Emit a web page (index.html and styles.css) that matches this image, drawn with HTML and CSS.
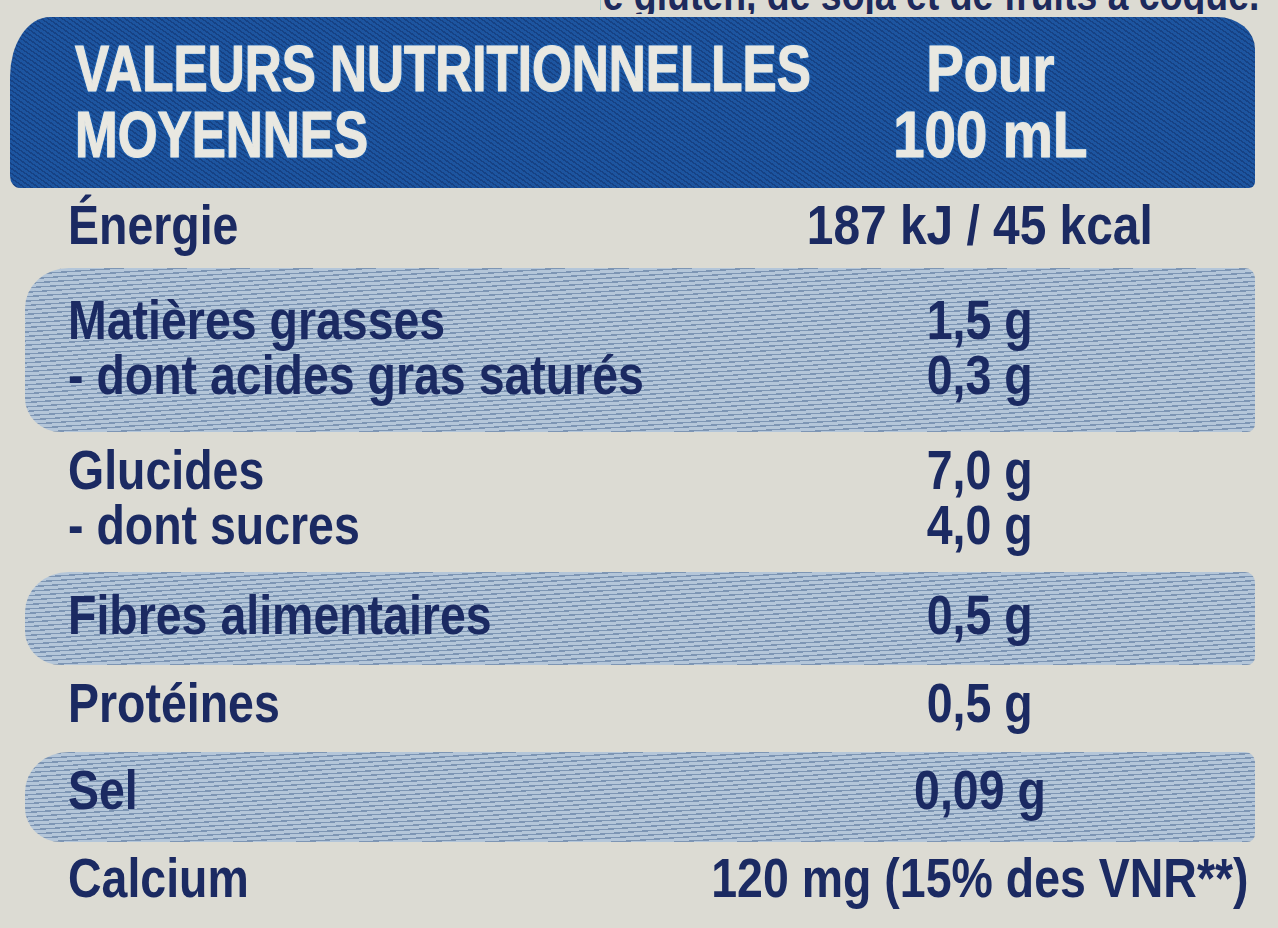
FILE: index.html
```html
<!DOCTYPE html>
<html lang="fr">
<head>
<meta charset="utf-8">
<title>Valeurs nutritionnelles moyennes</title>
<link rel="stylesheet" href="styles.css">
</head>
<body>
<div class="label">
  <div class="topline"><div class="topline-text">Peut contenir des traces de gluten, de soja et de fruits à coque.</div></div>

  <div class="header">
    <div class="head-left"><span class="sq sq-left">VALEURS NUTRITIONNELLES<br>MOYENNES</span></div>
    <div class="head-right"><span class="sq sq-right">Pour<br>100 mL</span></div>
  </div>

  <div class="row r-energie">
    <div class="name"><span class="sq">Énergie</span></div>
    <div class="val"><span class="sq sq-wide">187 kJ / 45 kcal</span></div>
  </div>

  <div class="row band r-mg">
    <div class="name"><span class="sq">Matières grasses<br>- dont acides gras saturés</span></div>
    <div class="val"><span class="sq">1,5 g<br>0,3 g</span></div>
  </div>

  <div class="row r-gluc">
    <div class="name"><span class="sq">Glucides<br>- dont sucres</span></div>
    <div class="val"><span class="sq">7,0 g<br>4,0 g</span></div>
  </div>

  <div class="row band r-fib">
    <div class="name"><span class="sq">Fibres alimentaires</span></div>
    <div class="val"><span class="sq">0,5 g</span></div>
  </div>

  <div class="row r-prot">
    <div class="name"><span class="sq">Protéines</span></div>
    <div class="val"><span class="sq">0,5 g</span></div>
  </div>

  <div class="row band r-sel">
    <div class="name"><span class="sq">Sel</span></div>
    <div class="val"><span class="sq">0,09 g</span></div>
  </div>

  <div class="row r-calc">
    <div class="name"><span class="sq">Calcium</span></div>
    <div class="val"><span class="sq">120 mg (15% des VNR**)</span></div>
  </div>
</div>
</body>
</html>
```

FILE: styles.css
```css
html, body {
  margin: 0;
  padding: 0;
}

body {
  width: 1278px;
  height: 928px;
  overflow: hidden;
  background: #dcdbd3;
  font-family: "Liberation Sans", Arial, sans-serif;
  color: #1b2a62;
}

.label {
  display: flex;
  flex-direction: column;
}

.sq {
  display: inline-block;
  white-space: nowrap;
  transform: scaleX(0.845);
}

.topline {
  height: 14px;
  overflow: hidden;
  margin-left: 600px;
  white-space: nowrap;
}

.topline-text {
  margin-top: -27px;
  margin-left: -465px;
  font-size: 44px;
  line-height: 44px;
  font-weight: 700;
  color: #1d2a5c;
  transform: scaleX(0.85);
  transform-origin: left center;
}

.header {
  margin: 3px 23px 0 10px;
  height: 171px;
  box-sizing: border-box;
  padding: 19px 15px 0 65px;
  display: grid;
  grid-template-columns: minmax(0, 1fr) 500px;
  background-color: #1d55a0;
  background-image: repeating-linear-gradient(35deg, rgba(10, 30, 80, 0.35) 0 1.5px, transparent 1.5px 4px);
  border-radius: 40px 38px 6px 10px / 60px 32px 6px 12px;
  color: #e9e8e1;
  font-size: 64px;
  line-height: 66px;
  font-weight: 700;
  -webkit-text-stroke: 1.2px #e9e8e1;
  text-shadow: 0 0 3px #2f80d6, 0 0 2px #2f80d6;
}

.sq-left {
  transform: scaleX(0.80);
  transform-origin: left center;
}

.head-right {
  display: flex;
  justify-content: center;
  text-align: center;
}

.sq-right {
  transform: scaleX(0.88);
  transform-origin: center center;
}

.row {
  display: grid;
  grid-template-columns: minmax(0, 1fr) 520px;
  margin: 0 23px 0 25px;
  padding: 0 15px 0 43px;
  font-size: 55px;
  line-height: 55px;
  font-weight: 700;
  box-sizing: border-box;
}

.name .sq {
  transform-origin: left center;
}

.val {
  display: flex;
  justify-content: center;
  text-align: center;
}

.val .sq {
  transform-origin: center center;
}

.val .sq-wide {
  transform: scaleX(0.87);
}

.band {
  background-color: #b4c6d9;
  background-image: repeating-linear-gradient(-4deg, rgba(35, 70, 120, 0.38) 0 1.4px, transparent 1.4px 4.4px);
  border-radius: 44px 10px 8px 36px / 40px 10px 8px 34px;
}

.r-energie { padding-top: 10px; height: 80px; }
.r-mg { padding-top: 25px; height: 164px; }
.r-gluc { padding-top: 11px; height: 140px; }
.r-fib { padding-top: 16px; height: 93px; }
.r-prot { padding-top: 11px; height: 87px; }
.r-sel { padding-top: 11px; height: 90px; }
.r-calc { padding-top: 9px; height: 86px; }
```
